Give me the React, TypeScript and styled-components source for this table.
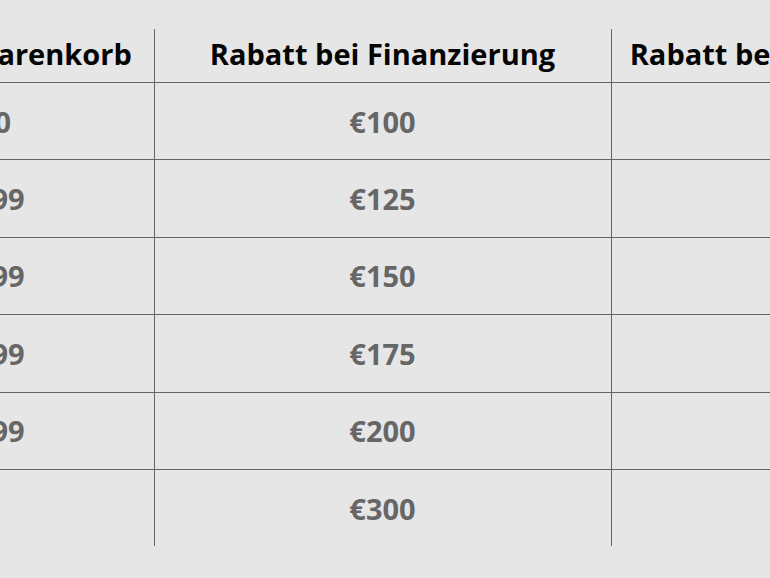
import React from 'react';
import styled, { createGlobalStyle } from 'styled-components';

const GlobalStyle = createGlobalStyle`
  html, body {
    margin: 0;
    padding: 0;
    background: #e6e6e6;
    overflow: hidden;
  }
`;

const Page = styled.div`
  width: 770px;
  height: 578px;
  overflow: hidden;
  padding-top: 29px;
  box-sizing: border-box;
  font-family: 'Open Sans', 'Noto Sans', sans-serif;
`;

// the table is wider than the view, scrolled a bit to the right
const Table = styled.table`
  border-collapse: collapse;
  table-layout: fixed;
  margin-left: -311px;
  width: 1319px;
`;

const HeadCell = styled.th<{ $last?: boolean }>`
  height: 49px;
  padding: 0 0 4px;
  font-size: 29px;
  font-weight: 700;
  color: #050505;
  text-align: center;
  white-space: nowrap;
  vertical-align: middle;
  border-bottom: 1px solid #666;
  border-right: ${(p) => (p.$last ? 'none' : '1px solid #666')};
`;

const Row = styled.tr<{ $last?: boolean }>`
  border-bottom: ${(p) => (p.$last ? 'none' : '1px solid #666')};
`;

const Cell = styled.td<{ $last?: boolean }>`
  height: 76.4px;
  padding: 0;
  font-size: 29px;
  font-weight: 700;
  color: #666;
  text-align: center;
  white-space: nowrap;
  vertical-align: middle;
  border-right: ${(p) => (p.$last ? 'none' : '1px solid #666')};
`;

const rows = [
  { cart: 'unter €1.000', finance: '€100', cash: '€50' },
  { cart: '€1.000 - €1.499', finance: '€125', cash: '€75' },
  { cart: '€1.500 - €1.999', finance: '€150', cash: '€100' },
  { cart: '€2.000 - €2.499', finance: '€175', cash: '€125' },
  { cart: '€2.500 - €2.999', finance: '€200', cash: '€150' },
  { cart: 'ab €3.000', finance: '€300', cash: '€200' },
];

export default function App() {
  return (
    <>
      <GlobalStyle />
      <Page>
        <Table>
          <colgroup>
            <col style={{ width: 465 }} />
            <col style={{ width: 457 }} />
            <col style={{ width: 397 }} />
          </colgroup>
          <thead>
            <tr>
              <HeadCell>Gesamtbetrag im Warenkorb</HeadCell>
              <HeadCell>Rabatt bei Finanzierung</HeadCell>
              <HeadCell $last>Rabatt bei Sofortzahlung</HeadCell>
            </tr>
          </thead>
          <tbody>
            {rows.map((r, i) => (
              <Row key={r.finance} $last={i === rows.length - 1}>
                <Cell>{r.cart}</Cell>
                <Cell>{r.finance}</Cell>
                <Cell $last>{r.cash}</Cell>
              </Row>
            ))}
          </tbody>
        </Table>
      </Page>
    </>
  );
}
